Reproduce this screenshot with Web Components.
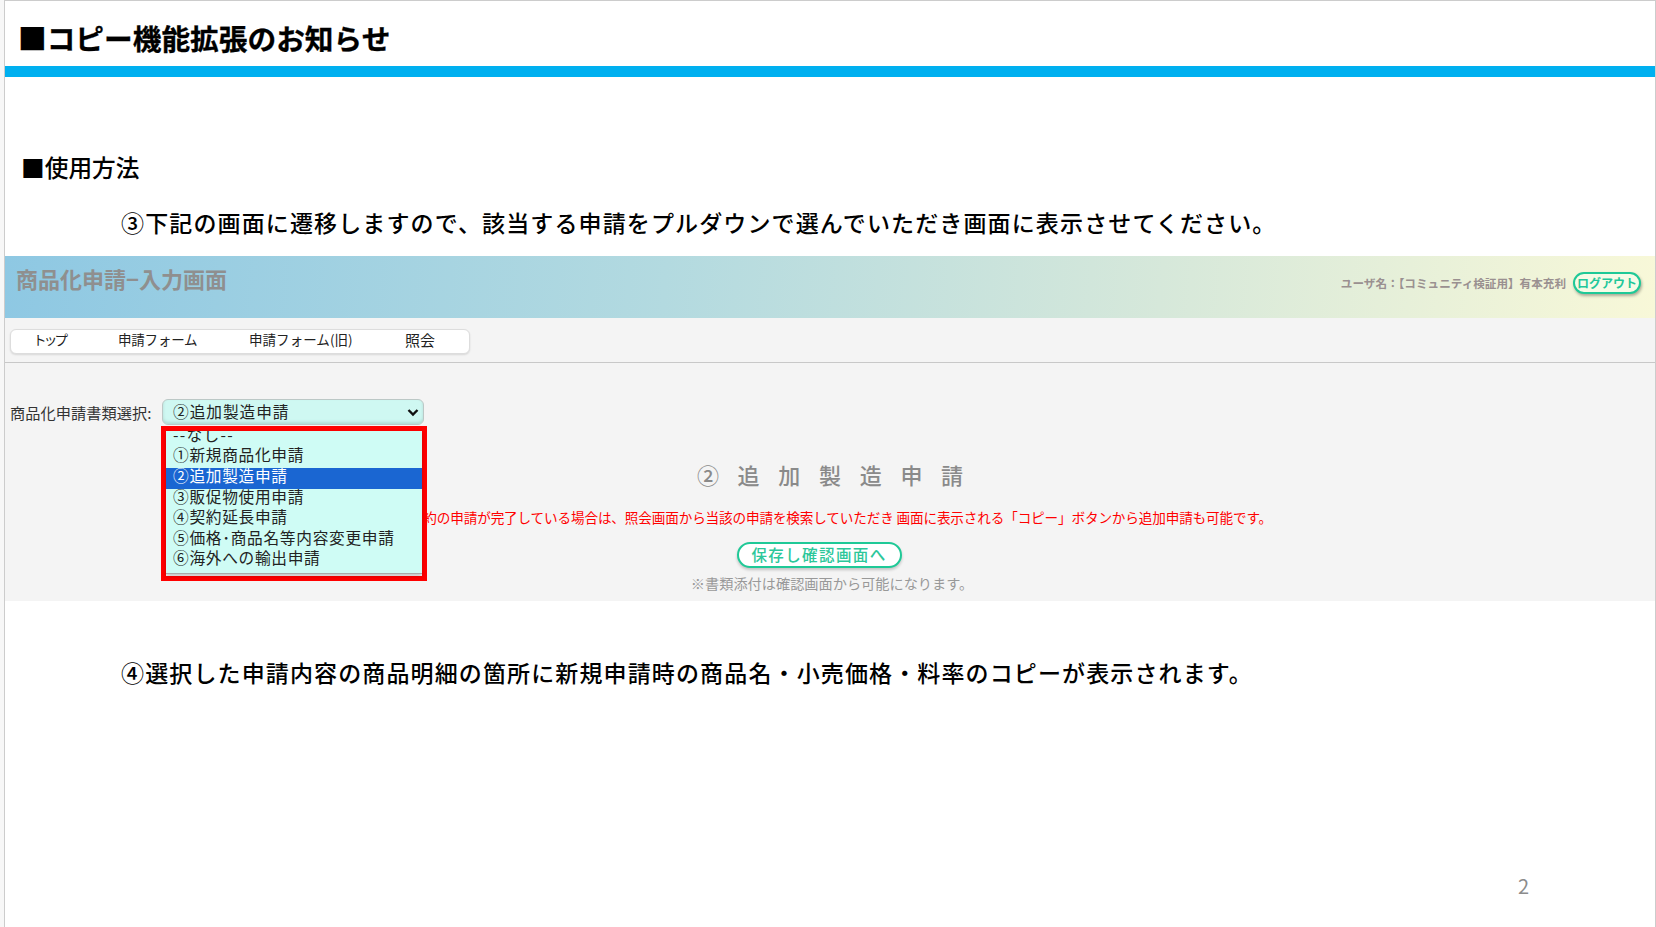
<!DOCTYPE html>
<html lang="ja"><head><meta charset="utf-8"><title>コピー機能拡張のお知らせ</title>
<style>
html,body{margin:0;padding:0;height:927px;overflow:hidden;background:#f7f7f7;font-family:"Noto Sans CJK JP","Liberation Sans",sans-serif;}
</style></head><body>
<slide-page>
  <slide-title>■コピー機能拡張のお知らせ</slide-title>
  <slide-line kind="head">■使用方法</slide-line>
  <slide-line kind="step" style="--top:21px">③下記の画面に遷移しますので、該当する申請をプルダウンで選んでいただき画面に表示させてください。</slide-line>
  <app-screen></app-screen>
  <slide-line kind="step" style="--top:56px">④選択した申請内容の商品明細の箇所に新規申請時の商品名・小売価格・料率のコピーが表示されます。</slide-line>
  <slide-number>2</slide-number>
</slide-page>
<script>
function def(name, html){
  customElements.define(name, class extends HTMLElement{
    constructor(){super();const r=this.attachShadow({mode:'open'});r.innerHTML=html;}
  });
}
def('slide-page',`<style>:host{display:flex;flex-direction:column;box-sizing:border-box;height:927px;margin-left:4px;background:#fff;border-top:1px solid #ccc;border-left:1px solid #ccc;border-right:1px solid #ccc;color:#000}</style><slot></slot>`);
def('slide-title',`<style>:host{display:block}
.t{height:54px;padding:11px 0 0 13px;font-size:28.7px;font-weight:700;line-height:52px;color:#000;white-space:nowrap;-webkit-text-stroke:.3px #000}
.b{height:11px;background:#00b0f0}</style><div class="t"><slot></slot></div><div class="b"></div>`);
def('slide-line',`<style>:host{display:block;height:34px;line-height:30px;white-space:nowrap;color:#000;font-weight:500}
:host([kind=head]){margin-top:75px;padding-left:16px;font-size:23.7px}
:host([kind=step]){margin-top:var(--top);padding-left:116px;font-size:23px;letter-spacing:1.13px}</style><slot></slot>`);
def('slide-number',`<style>:host{display:flex;justify-content:flex-end;margin-top:180px;height:30px;line-height:30px;padding-right:126px;font-size:20px;color:#8c8c8c}</style><slot></slot>`);
def('app-header',`<style>:host{display:flex;align-items:center;justify-content:space-between;height:62px;box-sizing:border-box;padding:0 14px 0 11px;background:linear-gradient(95deg,#8ec8e3 0%,#b3dae0 40%,#d6e8da 70%,#f8f8d8 100%)}
.h{font-size:22px;font-weight:700;color:#8f8f8f;margin-top:-18px;white-space:nowrap}
.u{display:flex;align-items:center;gap:7px;margin-top:-9px}
.n{font-size:11.6px;font-weight:700;color:#9a9090;white-space:nowrap}
.o{display:block;box-sizing:border-box;width:68px;height:22px;line-height:18px;text-align:center;border:2px solid #1fc997;border-radius:11px;background:#f6fbe6;font-size:12px;font-weight:700;color:#22c79a;box-shadow:1px 2px 3px rgba(0,0,0,.3);white-space:nowrap}
</style><div class="h">商品化申請−入力画面</div><div class="u"><span class="n">ユーザ名：【コミュニティ検証用】有本充利</span><span class="o">ログアウト</span></div>`);
def('app-nav',`<style>:host{display:block;padding:11px 0 8px 5px;border-bottom:1px solid #c8c8c8}
.n{display:inline-flex;box-sizing:border-box;width:460px;height:25px;line-height:19px;align-items:flex-start;padding:0;background:#fff;border:1px solid #ddd;border-radius:6px;box-shadow:0 1px 2px rgba(0,0,0,.12);font-size:13.5px;color:#222;white-space:nowrap;vertical-align:top}
span{display:block}
.a{margin-left:22px;width:34px;letter-spacing:-2.8px}
.b{margin-left:51px;width:80px;letter-spacing:-.2px}
.c{margin-left:51px;width:105px;letter-spacing:.05px}
.d{margin-left:51px;font-size:15px}
</style><div class="n"><span class="a">トップ</span><span class="b">申請フォーム</span><span class="c">申請フォーム(旧)</span><span class="d">照会</span></div>`);
def('form-select',`<style>:host{display:flex;align-items:center;padding-left:5px;height:26px;position:relative;font-size:15.7px;color:#222}
.l{width:152px;font-size:15.2px;line-height:16px;white-space:nowrap;color:#333;letter-spacing:.05px}
.s{display:flex;align-items:center;justify-content:space-between;box-sizing:border-box;width:262px;height:26px;line-height:22px;padding:0 4px 0 10px;background:#cff8f2;border:1px solid #bcc8c6;border-radius:6px;box-shadow:inset 0 -2px 3px rgba(90,130,125,.25);white-space:nowrap;letter-spacing:.95px}
.s span{margin-top:-1px}
svg{display:block}
.pop{position:absolute;left:156px;top:27px;z-index:2;box-sizing:border-box;width:266px;height:155px;border:5px solid #f00;background:#f3f3f3;}
.list{height:142px;overflow:hidden;background:#cffcf5;border-bottom:1px solid #aaa;box-shadow:0 2px 4px rgba(0,0,0,.2)}
.i{height:20.6px;line-height:16.6px;padding-left:7px;white-space:nowrap;letter-spacing:.7px}
.i.f{margin-top:-4.2px;letter-spacing:1.3px}
.i.a{background:#1a66d2;color:#fff}
</style><span class="l">商品化申請書類選択:</span>
<div class="s"><span>②追加製造申請</span><svg width="12" height="9" viewBox="0 0 12 9"><path d="M1.5 2 L6 6.5 L10.5 2" fill="none" stroke="#111" stroke-width="2.4"/></svg></div>
<div class="pop"><div class="list">
<div class="i f">--なし--</div><div class="i">①新規商品化申請</div><div class="i a">②追加製造申請</div><div class="i">③販促物使用申請</div><div class="i">④契約延長申請</div><div class="i">⑤価格･商品名等内容変更申請</div><div class="i">⑥海外への輸出申請</div>
</div></div>`);
def('form-body',`<style>:host{display:flex;flex-direction:column;align-items:center}
.h{margin-top:36px;height:30px;line-height:26px;font-size:22px;font-weight:500;letter-spacing:18.7px;padding-left:18.7px;color:#8a8a8a;white-space:nowrap}
.r{margin-top:17px;margin-right:5px;height:20px;line-height:18px;font-size:13.6px;letter-spacing:-.135px;color:#f00;white-space:nowrap}
.b{display:block;box-sizing:border-box;margin-top:14px;margin-right:22px;width:165px;height:26px;line-height:21px;text-align:center;border:2px solid #1fc997;border-radius:13px;background:#fff;color:#2cc79a;font-size:15.5px;font-weight:500;letter-spacing:1.4px;box-shadow:0 2px 3px rgba(0,0,0,.2);white-space:nowrap}
.n{margin-top:6px;margin-left:4px;height:20px;line-height:18px;font-size:14.2px;color:#999;white-space:nowrap}
</style><div class="h">②追加製造申請</div>
<div class="r">新規契約の申請が完了している場合は、照会画面から当該の申請を検索していただき 画面に表示される「コピー」ボタンから追加申請も可能です。</div>
<span class="b">保存し確認画面へ</span>
<div class="n">※書類添付は確認画面から可能になります。</div>`);
def('app-screen',`<style>:host{display:block;margin-top:15px;height:345px;background:#f4f4f4}
form-select{margin-top:36px}</style><app-header></app-header><app-nav></app-nav><form-select></form-select><form-body></form-body>`);
</script>
</body></html>
